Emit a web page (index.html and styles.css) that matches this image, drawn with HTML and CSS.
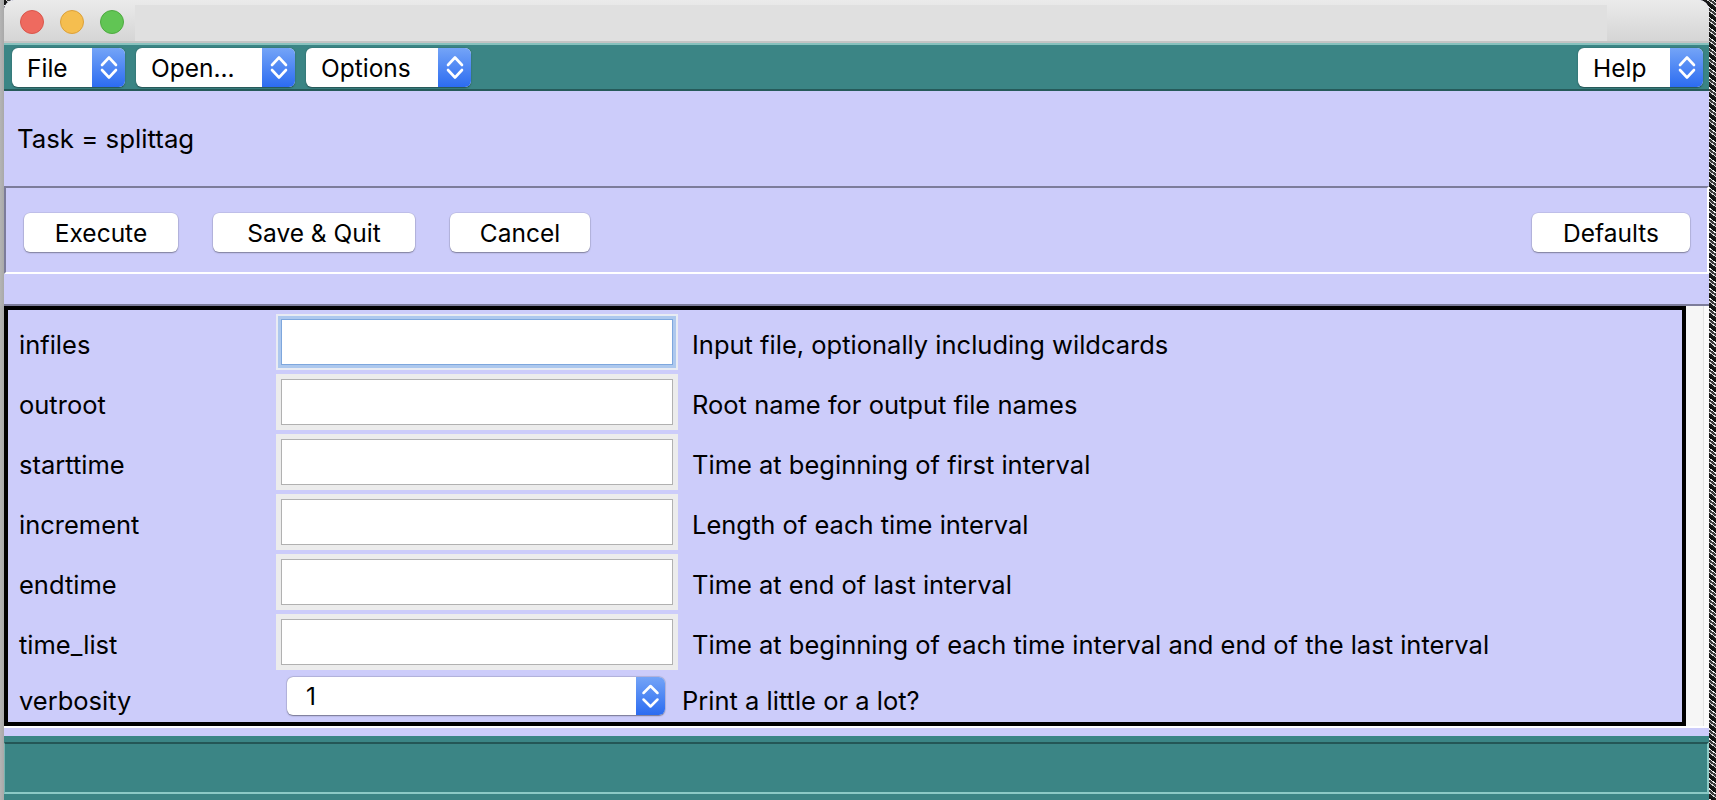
FILE: index.html
```html
<!DOCTYPE html>
<html>
<head>
<meta charset="utf-8">
<title>splittag</title>
<link rel="stylesheet" href="styles.css">
</head>
<body>
<div class="window">
  <div class="titlebar">
    <div class="lights">
      <span class="light red"></span>
      <span class="light yellow"></span>
      <span class="light green"></span>
    </div>
    <div class="title-blank"></div>
  </div>

  <div class="menubar">
    <div class="mb mb-file">
      <span class="mb-label">File</span>
      <span class="mb-arrow"><svg width="33" height="39" viewBox="0 0 33 39"><path d="M10 17 L17 9.5 L24 17 M10 22 L17 29.5 L24 22" fill="none" stroke="#fff" stroke-width="2.6" stroke-linecap="round" stroke-linejoin="round"/></svg></span>
    </div>
    <div class="mb mb-open">
      <span class="mb-label">Open...</span>
      <span class="mb-arrow"><svg width="33" height="39" viewBox="0 0 33 39"><path d="M10 17 L17 9.5 L24 17 M10 22 L17 29.5 L24 22" fill="none" stroke="#fff" stroke-width="2.6" stroke-linecap="round" stroke-linejoin="round"/></svg></span>
    </div>
    <div class="mb mb-options">
      <span class="mb-label">Options</span>
      <span class="mb-arrow"><svg width="33" height="39" viewBox="0 0 33 39"><path d="M10 17 L17 9.5 L24 17 M10 22 L17 29.5 L24 22" fill="none" stroke="#fff" stroke-width="2.6" stroke-linecap="round" stroke-linejoin="round"/></svg></span>
    </div>
    <div class="mb mb-help">
      <span class="mb-label">Help</span>
      <span class="mb-arrow"><svg width="33" height="39" viewBox="0 0 33 39"><path d="M10 17 L17 9.5 L24 17 M10 22 L17 29.5 L24 22" fill="none" stroke="#fff" stroke-width="2.6" stroke-linecap="round" stroke-linejoin="round"/></svg></span>
    </div>
  </div>

  <div class="task">Task = splittag</div>

  <div class="actions">
    <button class="btn btn-execute">Execute</button>
    <button class="btn btn-save">Save &amp; Quit</button>
    <button class="btn btn-cancel">Cancel</button>
    <button class="btn btn-defaults">Defaults</button>
  </div>

  <div class="spacer"></div>

  <div class="params-area">
    <div class="params">
      <div class="label">infiles</div>
      <div class="cell focus"><input class="entry" type="text"></div>
      <div class="desc">Input file, optionally including wildcards</div>

      <div class="label">outroot</div>
      <div class="cell"><input class="entry" type="text"></div>
      <div class="desc">Root name for output file names</div>

      <div class="label">starttime</div>
      <div class="cell"><input class="entry" type="text"></div>
      <div class="desc">Time at beginning of first interval</div>

      <div class="label">increment</div>
      <div class="cell"><input class="entry" type="text"></div>
      <div class="desc">Length of each time interval</div>

      <div class="label">endtime</div>
      <div class="cell"><input class="entry" type="text"></div>
      <div class="desc">Time at end of last interval</div>

      <div class="label">time_list</div>
      <div class="cell"><input class="entry" type="text"></div>
      <div class="desc">Time at beginning of each time interval and end of the last interval</div>

      <div class="label">verbosity</div>
      <div class="vmb">
        <span class="vmb-label">1</span>
        <span class="vmb-arrow"><svg width="29" height="38" viewBox="0 0 29 38"><path d="M7.5 16 L14.5 9 L21.5 16 M7.5 22.5 L14.5 29.5 L21.5 22.5" fill="none" stroke="#fff" stroke-width="2.5" stroke-linecap="round" stroke-linejoin="round"/></svg></span>
      </div>
      <div class="desc desc-v">Print a little or a lot?</div>
    </div>
    <div class="trough"></div>
  </div>

  <div class="after"></div>

  <div class="status"><div class="status-inner"></div></div>
</div>
</body>
</html>
```

FILE: styles.css
```css
html, body {
  margin: 0;
  padding: 0;
}

body {
  width: 1716px;
  height: 800px;
  overflow: hidden;
  font-family: Inter, "Liberation Sans", Arial, sans-serif;
  color: #000;
  background:
    linear-gradient(to right, #b4b4b4 0, #a9a9a9 4px, transparent 4px, transparent 1709px, transparent 1709px),
    repeating-linear-gradient(37deg, #1a1a1a 0 2px, #d8d8d8 2px 3px, #3c3c3c 3px 5px, #efefef 5px 6px, #111 6px 8px);
}

.window {
  margin-left: 4px;
  width: 1705px;
  height: 800px;
  background: #ccccfa;
  border-radius: 10px 10px 0 0;
  overflow: hidden;
  display: flex;
  flex-direction: column;
}

.window > * {
  flex-shrink: 0;
}

/* title bar */
.titlebar {
  box-sizing: border-box;
  height: 43px;
  border-bottom: 2px solid #c4c4c4;
  background: linear-gradient(#ebebeb, #d5d5d5);
  display: flex;
}

.lights {
  width: 131px;
  box-sizing: border-box;
  padding: 10px 0 0 16px;
  display: flex;
  align-items: flex-start;
  gap: 16px;
}

.light {
  width: 24px;
  height: 24px;
  border-radius: 50%;
  box-sizing: border-box;
}

.red { background: #ee6a5f; border: 1px solid #d9564b; }
.yellow { background: #f5be4f; border: 1px solid #dba03a; }
.green { background: #61c554; border: 1px solid #4eaa40; }

.title-blank {
  width: 1472px;
  margin-top: 5px;
  background: #e0e0e0;
}

/* menu bar */
.menubar {
  box-sizing: border-box;
  height: 48px;
  background: #3b8585;
  border-top: 2px solid #86c2be;
  border-bottom: 2px solid #265a5a;
  display: flex;
  align-items: flex-start;
  gap: 11px;
  padding: 3px 6px 0 8px;
}

.mb {
  display: flex;
  height: 39px;
  border-radius: 6px;
  overflow: hidden;
  background: #fff;
  box-shadow: 0 0.5px 1.5px rgba(0, 0, 0, 0.4);
}

.mb-label {
  box-sizing: border-box;
  padding-left: 15px;
  padding-top: 1px;
  font-size: 24.5px;
  display: flex;
  align-items: center;
}

.mb-file .mb-label { width: 80px; }
.mb-open .mb-label { width: 126px; }
.mb-options .mb-label { width: 132px; }
.mb-help .mb-label { width: 92px; }
.mb-help { margin-left: auto; }

.mb-arrow {
  width: 33px;
  height: 39px;
  background: linear-gradient(#74a4f7, #2c6cf1);
  display: block;
}

.mb-arrow svg, .vmb-arrow svg {
  display: block;
}

/* task line */
.task {
  height: 95px;
  display: flex;
  align-items: center;
  padding-left: 13px;
  font-size: 25.8px;
}

/* action buttons */
.actions {
  box-sizing: border-box;
  height: 88px;
  border-top: 2px solid #7c7c9a;
  border-left: 2px solid #7c7c9a;
  border-bottom: 2px solid #ffffff;
  border-right: 2px solid #ffffff;
  padding: 25px 17px 0 18px;
  display: flex;
  align-items: flex-start;
  gap: 35px;
}

.btn {
  height: 39px;
  margin: 0;
  padding: 0;
  border: none;
  border-radius: 6px;
  background: #fff;
  font-family: inherit;
  font-size: 24.5px;
  color: #000;
  display: flex;
  align-items: center;
  justify-content: center;
  box-shadow: 0 0 0 0.5px rgba(0, 0, 0, 0.12), 0 1px 1.5px rgba(0, 0, 0, 0.35);
}

.btn-execute { width: 154px; }
.btn-save { width: 202px; }
.btn-cancel { width: 140px; }
.btn-defaults { width: 158px; margin-left: auto; }

.spacer {
  height: 30px;
}

/* parameter area */
.params-area {
  box-sizing: border-box;
  height: 424px;
  border-top: 2px solid #7c7c9a;
  border-bottom: 2px solid #ffffff;
  display: flex;
}

.params {
  box-sizing: border-box;
  width: 1682px;
  height: 420px;
  border: 4px solid #000;
  padding-top: 4px;
  display: grid;
  grid-template-columns: 268px 402px 1fr;
  grid-template-rows: repeat(6, 56px) 48px;
  row-gap: 4px;
  align-content: start;
}

.label {
  align-self: center;
  padding-left: 11px;
  padding-top: 4px;
  font-size: 25.5px;
}

.desc {
  align-self: center;
  padding-left: 14px;
  padding-top: 4px;
  font-size: 25.5px;
  white-space: nowrap;
}

.desc-v {
  padding-left: 4px;
}

.cell {
  box-sizing: border-box;
  height: 56px;
  padding: 5px;
  background: #ececec;
}

.entry {
  display: block;
  box-sizing: border-box;
  width: 100%;
  height: 46px;
  margin: 0;
  padding: 0 6px;
  border: 1px solid #b1b1b1;
  background: #fff;
  font-family: inherit;
  font-size: 24px;
  outline: none;
}

.cell.focus {
  background: #e8ebf3;
}

.cell.focus .entry {
  border: 1px solid #7ea7dd;
  box-shadow: 0 0 0 3px #adc8ee;
}

.vmb {
  align-self: start;
  margin: 3px 0 0 11px;
  width: 378px;
  height: 38px;
  display: flex;
  border-radius: 6px;
  overflow: hidden;
  background: #fff;
  box-shadow: 0 0 0 0.5px rgba(0, 0, 0, 0.1), 0 0.5px 1.5px rgba(0, 0, 0, 0.4);
}

.vmb-label {
  flex: 1;
  padding-left: 19px;
  font-size: 24.5px;
  display: flex;
  align-items: center;
}

.vmb-arrow {
  width: 29px;
  height: 38px;
  background: linear-gradient(#74a4f7, #2c6cf1);
}

.trough {
  flex: 1;
  background: #f6f6f6;
  box-shadow: inset -5px 0 0 #fbfbfb, inset -6px 0 0 #e3e3e3;
}

.after {
  height: 8px;
}

/* status bar */
.status {
  box-sizing: border-box;
  height: 64px;
  background: #3b8585;
  padding-top: 6px;
}

.status-inner {
  box-sizing: border-box;
  height: 52px;
  border-top: 2px solid #245656;
  border-bottom: 2px solid #8ccac6;
  border-left: 1px solid #76b4b0;
  border-right: 2px solid #8ccac6;
}
```
